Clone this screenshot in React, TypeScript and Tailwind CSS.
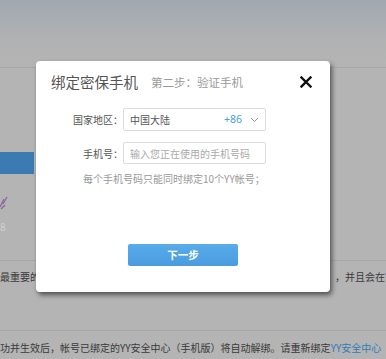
import React from 'react';

const font = { fontFamily: '"Noto Sans CJK SC", "Noto Sans", sans-serif' };

const CloseIcon: React.FC = () => (
  <svg width="12" height="12" viewBox="0 0 12 12">
    <path d="M1.5 1.5 L10.5 10.5 M10.5 1.5 L1.5 10.5" stroke="#111" strokeWidth="2.4" strokeLinecap="square" />
  </svg>
);

const Chevron: React.FC = () => (
  <svg width="9" height="6" viewBox="0 0 9 6">
    <path d="M1 1 L4.5 4.5 L8 1" fill="none" stroke="#999" strokeWidth="1" />
  </svg>
);

const BindPhoneDialog: React.FC = () => {
  return (
    <div className="absolute left-[36px] top-[61px] w-[294px] h-[231px] bg-white rounded-[4px] shadow-[2px_3px_5px_rgba(0,0,0,0.55)] flex flex-col">
      {/* Header */}
      <div className="flex items-center h-[20px] mt-[11px] pl-[15px] pr-[18px]">
        <span className="text-[14.5px] text-[#555] leading-[20px]">绑定密保手机</span>
        <span className="text-[11.5px] text-[#9a9a9a] ml-[13px] leading-[20px]">第二步：验证手机</span>
        <button className="ml-auto flex items-center justify-center w-[12px] h-[12px]">
          <CloseIcon />
        </button>
      </div>

      {/* Form */}
      <div className="flex flex-col mt-[16px]">
        <div className="flex items-center">
          <label className="w-[87px] text-right text-[10px] text-[#555]">国家地区：</label>
          <div className="w-[143px] h-[23px] border border-[#dcdcdc] rounded-[2px] flex items-center pl-[6px] pr-[6px]">
            <span className="text-[10px] text-[#555]">中国大陆</span>
            <span className="ml-auto text-[10.5px] text-[#4a9fe0]" style={{ fontFamily: '"Noto Sans", sans-serif' }}>+86</span>
            <span className="ml-[8px] flex items-center"><Chevron /></span>
          </div>
        </div>
        <div className="flex items-center mt-[11px]">
          <label className="w-[87px] text-right text-[10px] text-[#555]">手机号：</label>
          <input
            className="w-[143px] h-[22px] border border-[#dcdcdc] rounded-[2px] pl-[6px] text-[10px] text-[#555] placeholder:text-[#aaa] outline-none"
            placeholder="输入您正在使用的手机号码"
            style={font}
          />
        </div>
        <p className="mt-[8px] pl-[47px] text-[10px] leading-[14px] text-[#999]">每个手机号码只能同时绑定10个YY帐号；</p>
      </div>

      {/* Next */}
      <div className="flex justify-center mt-[58px]">
        <button className="w-[110px] h-[22px] rounded-[2px] bg-gradient-to-b from-[#57ace9] to-[#4a9bdf] text-white text-[10.5px] font-bold" style={font}>
          下一步
        </button>
      </div>
    </div>
  );
};

const App: React.FC = () => {
  return (
    <div className="relative w-[386px] h-[359px] overflow-hidden bg-[#b4b4b4] flex" style={font}>
      <div className="flex-1 flex flex-col">
        {/* top bar area */}
        <div className="h-[68px] bg-gradient-to-b from-[#a0a8b0] via-[#b1b2b3] via-60% to-[#b4b4b4] border-b border-[#a7a7a7]" />

        {/* left nav remnants */}
        <div className="h-[193px] border-b border-[#a7a7a7] flex flex-col">
          <div className="mt-[84px] w-[34px] h-[22px] bg-[#3b7bb2]" />
          <svg className="mt-[21px]" width="10" height="16" viewBox="0 0 10 16">
            <path d="M0 12 L4 4 M3 9 L7 2 M1 14 L5 10" stroke="#8e6aa0" strokeWidth="1.4" fill="none" />
          </svg>
          <span className="mt-[10px] text-[10px] text-[#d0d0d0] leading-[12px]">8</span>
        </div>

        {/* notice row */}
        <div className="h-[70px] border-b border-[#a7a7a7] flex items-start pt-[9px] text-[10px] text-[#3a3a3a] leading-[14px]">
          <span>最重要的</span>
          <span className="ml-auto mr-[1px]">，并且会在<span className="text-[#2f7db5]">Y</span></span>
        </div>

        {/* bottom row */}
        <div className="flex-1 pt-[10px] text-[10px] text-[#3a3a3a] leading-[14px] whitespace-nowrap">
          功并生效后，帐号已绑定的YY安全中心（手机版）将自动解绑。请重新绑定<span className="text-[#2f7db5]">YY安全中心（</span>
        </div>
      </div>

      {/* scrollbar edge */}
      <div className="w-[3px] border-l border-[#8c8c8c] bg-[#a9a9a9]" />

      <BindPhoneDialog />
    </div>
  );
};

export default App;
